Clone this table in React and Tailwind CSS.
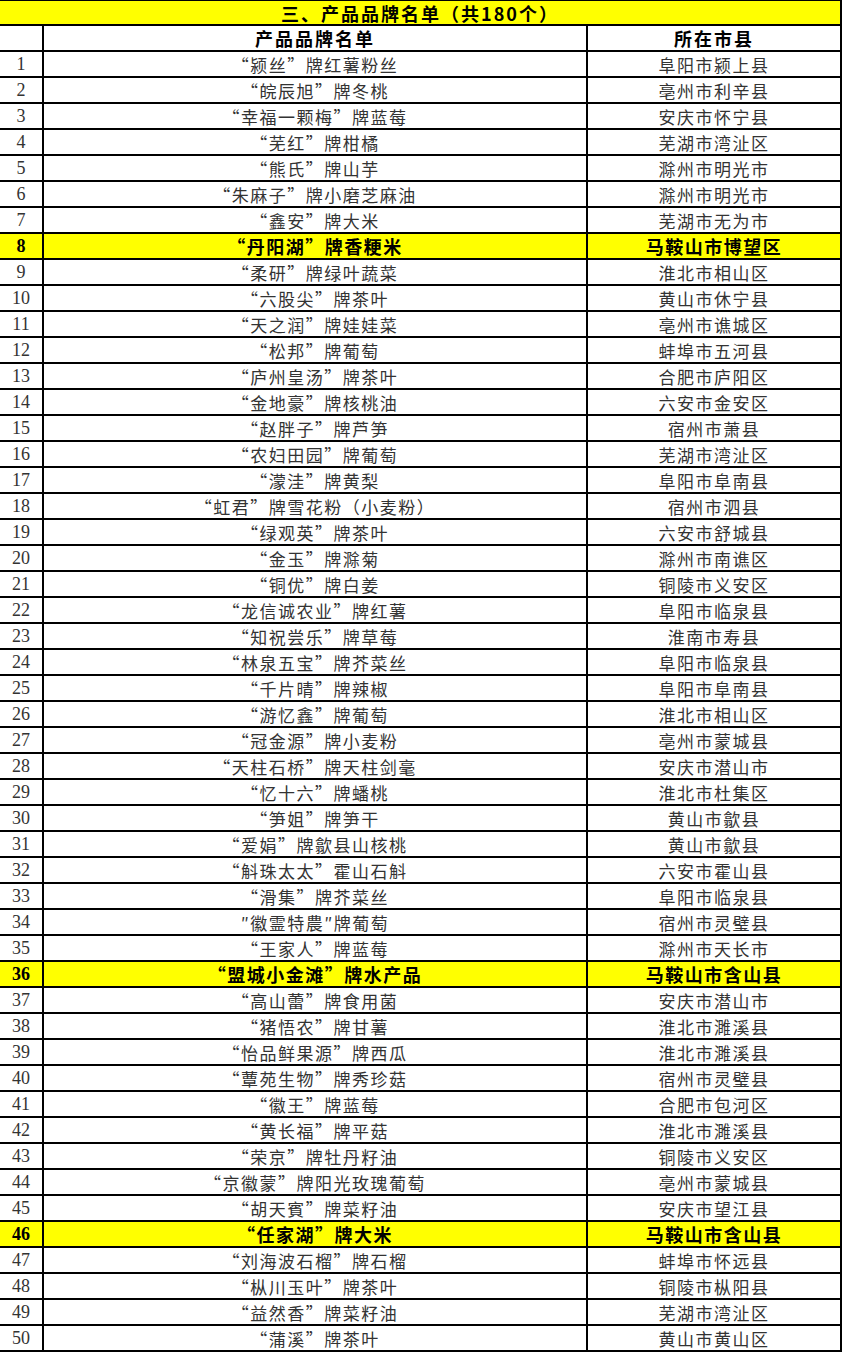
import React from "react";

const rows = [
  ["“颍丝”牌红薯粉丝", "阜阳市颍上县"],
  ["“皖辰旭”牌冬桃", "亳州市利辛县"],
  ["“幸福一颗梅”牌蓝莓", "安庆市怀宁县"],
  ["“芜红”牌柑橘", "芜湖市湾沚区"],
  ["“熊氏”牌山芋", "滁州市明光市"],
  ["“朱麻子”牌小磨芝麻油", "滁州市明光市"],
  ["“鑫安”牌大米", "芜湖市无为市"],
  ["“丹阳湖”牌香粳米", "马鞍山市博望区", true],
  ["“柔研”牌绿叶蔬菜", "淮北市相山区"],
  ["“六股尖”牌茶叶", "黄山市休宁县"],
  ["“天之润”牌娃娃菜", "亳州市谯城区"],
  ["“松邦”牌葡萄", "蚌埠市五河县"],
  ["“庐州皇汤”牌茶叶", "合肥市庐阳区"],
  ["“金地豪”牌核桃油", "六安市金安区"],
  ["“赵胖子”牌芦笋", "宿州市萧县"],
  ["“农妇田园”牌葡萄", "芜湖市湾沚区"],
  ["“濛洼”牌黄梨", "阜阳市阜南县"],
  ["“虹君”牌雪花粉（小麦粉）", "宿州市泗县"],
  ["“绿观英”牌茶叶", "六安市舒城县"],
  ["“金玉”牌滁菊", "滁州市南谯区"],
  ["“铜优”牌白姜", "铜陵市义安区"],
  ["“龙信诚农业”牌红薯", "阜阳市临泉县"],
  ["“知祝尝乐”牌草莓", "淮南市寿县"],
  ["“林泉五宝”牌芥菜丝", "阜阳市临泉县"],
  ["“千片晴”牌辣椒", "阜阳市阜南县"],
  ["“游忆鑫”牌葡萄", "淮北市相山区"],
  ["“冠金源”牌小麦粉", "亳州市蒙城县"],
  ["“天柱石桥”牌天柱剑毫", "安庆市潜山市"],
  ["“忆十六”牌蟠桃", "淮北市杜集区"],
  ["“笋姐”牌笋干", "黄山市歙县"],
  ["“爱娟”牌歙县山核桃", "黄山市歙县"],
  ["“斛珠太太”霍山石斛", "六安市霍山县"],
  ["“滑集”牌芥菜丝", "阜阳市临泉县"],
  ["″徽霊特農″牌葡萄", "宿州市灵璧县"],
  ["“王家人”牌蓝莓", "滁州市天长市"],
  ["“盟城小金滩”牌水产品", "马鞍山市含山县", true],
  ["“高山蕾”牌食用菌", "安庆市潜山市"],
  ["“猪悟农”牌甘薯", "淮北市濉溪县"],
  ["“怡品鲜果源”牌西瓜", "淮北市濉溪县"],
  ["“蕈苑生物”牌秀珍菇", "宿州市灵璧县"],
  ["“徽王”牌蓝莓", "合肥市包河区"],
  ["“黄长福”牌平菇", "淮北市濉溪县"],
  ["“荣京”牌牡丹籽油", "铜陵市义安区"],
  ["“京徽蒙”牌阳光玫瑰葡萄", "亳州市蒙城县"],
  ["“胡天賓”牌菜籽油", "安庆市望江县"],
  ["“任家湖”牌大米", "马鞍山市含山县", true],
  ["“刘海波石榴”牌石榴", "蚌埠市怀远县"],
  ["“枞川玉叶”牌茶叶", "铜陵市枞阳县"],
  ["“益然香”牌菜籽油", "芜湖市湾沚区"],
  ["“蒲溪”牌茶叶", "黄山市黄山区"],
];

const cjk = "font-['Noto_Sans_CJK_SC',sans-serif]";

export default function App() {
  return (
    <div className="w-[842px] bg-white text-[17px] leading-none">
      <div className={`h-[26px] border-t border-b-2 border-r-2 border-black bg-[#ffff00] flex items-center justify-center font-bold text-black text-[18px] tracking-[2px] ${cjk}`}>
        三、产品品牌名单（共180个）
      </div>

      <div className={`h-[26px] flex border-b-2 border-black font-bold text-black text-[18px] ${cjk}`}>
        <div className="w-[44px] border-r-2 border-black" />
        <div className="w-[544px] border-r-2 border-black flex items-center justify-center tracking-[2px]">
          产品品牌名单
        </div>
        <div className="flex-1 border-r-2 border-black flex items-center justify-center tracking-[2px]">
          所在市县
        </div>
      </div>

      {rows.map(([name, city, hl], i) => (
        <div
          key={i}
          className={`h-[26px] flex border-b-2 border-black ${
            hl
              ? "bg-[#ffff00] font-bold text-black text-[18px] tracking-[1.5px]"
              : "text-[#333333] tracking-[1.5px]"
          }`}
        >
          <div className="w-[44px] border-r-2 border-black flex items-center justify-center font-['Liberation_Serif',serif] text-[18px] tracking-normal">
            {i + 1}
          </div>
          <div className={`w-[544px] border-r-2 border-black flex items-center justify-center ${cjk}`}>
            {name}
          </div>
          <div className={`flex-1 border-r-2 border-black flex items-center justify-center ${cjk}`}>
            {city}
          </div>
        </div>
      ))}
    </div>
  );
}
